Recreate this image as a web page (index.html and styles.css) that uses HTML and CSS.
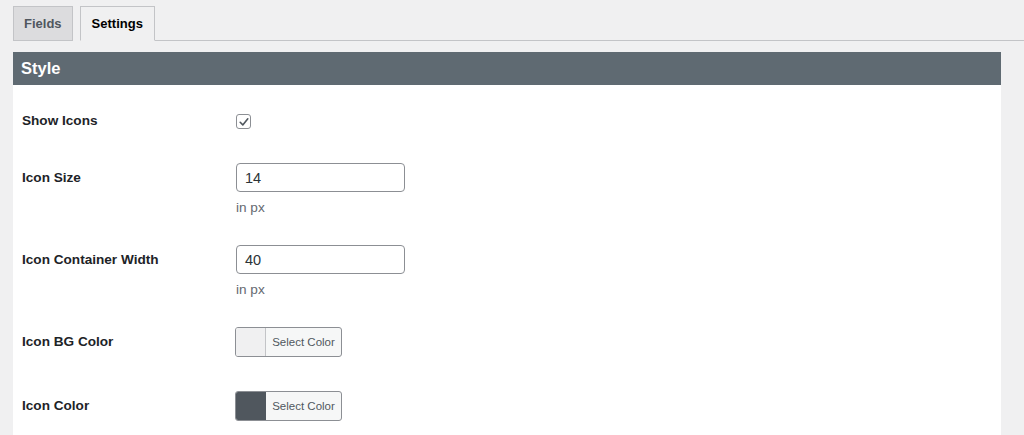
FILE: index.html
```html
<!DOCTYPE html>
<html>
<head>
<meta charset="utf-8">
<link rel="stylesheet" href="styles.css">
</head>
<body>
<div class="wrap">
  <nav class="tabs">
    <span class="tab">Fields</span>
    <span class="tab active">Settings</span>
    <span class="tab-fill"></span>
  </nav>
  <section class="panel">
    <h2 class="panel-title">Style</h2>
    <div class="rows">
      <div class="row">
        <div class="label">Show Icons</div>
        <div class="field">
          <span class="checkbox">
            <svg width="12" height="12" viewBox="0 0 12 12"><path d="M2.2 6.3 L4.8 8.9 L9.8 2.8" fill="none" stroke="#50575e" stroke-width="1.6" stroke-linecap="round" stroke-linejoin="round"/></svg>
          </span>
        </div>
      </div>
      <div class="row">
        <div class="label lbl-input">Icon Size</div>
        <div class="field">
          <div class="input">14</div>
          <div class="desc">in px</div>
        </div>
      </div>
      <div class="row">
        <div class="label lbl-input">Icon Container Width</div>
        <div class="field">
          <div class="input">40</div>
          <div class="desc">in px</div>
        </div>
      </div>
      <div class="row">
        <div class="label lbl-input">Icon BG Color</div>
        <div class="field">
          <div class="color-btn"><span class="swatch light"></span><span class="color-text">Select Color</span></div>
        </div>
      </div>
      <div class="row">
        <div class="label lbl-input">Icon Color</div>
        <div class="field">
          <div class="color-btn"><span class="swatch dark"></span><span class="color-text">Select Color</span></div>
        </div>
      </div>
    </div>
  </section>
</div>
</body>
</html>
```
FILE: styles.css
```css
html, body {
  margin: 0;
  padding: 0;
  background: #f0f0f1;
  font-family: "Liberation Sans", Arial, sans-serif;
  color: #1d2327;
  overflow: hidden;
}
.wrap {
  padding: 6px 23px 0 13px;
}
.tabs {
  display: flex;
  align-items: flex-end;
  height: 35px;
}
.tab {
  box-sizing: border-box;
  height: 35px;
  padding: 0 10px;
  display: flex;
  align-items: center;
  font-size: 13px;
  font-weight: bold;
  color: #50575e;
  background: #dcdcde;
  border: 1px solid #c3c4c7;
  margin-right: 7px;
}
.tab.active {
  padding: 0 11px;
  background: #f0f0f1;
  color: #000;
  border-bottom-color: #f0f0f1;
  margin-right: 0;
}
.tab-fill {
  flex: 1;
  border-bottom: 1px solid #c3c4c7;
  margin-right: -23px;
}
.panel {
  margin-top: 11px;
  background: #fff;
  height: 400px;
}
.panel-title {
  margin: 0;
  height: 33px;
  box-sizing: border-box;
  background: #5f6a72;
  color: #fff;
  font-size: 16.5px;
  font-weight: bold;
  padding: 0 8px;
  display: flex;
  align-items: center;
}
.rows {
  padding-top: 28px;
}
.row {
  display: flex;
  padding-left: 9px;
}
.label {
  width: 214px;
  font-size: 13.6px;
  font-weight: bold;
  color: #1d2327;
  line-height: 16px;
}
.row:nth-child(1) { height: 50px; }
.row:nth-child(2) { height: 82px; }
.row:nth-child(3) { height: 82px; }
.row:nth-child(4) { height: 64px; }
.lbl-input { padding-top: 7px; }
.checkbox {
  box-sizing: border-box;
  width: 15px;
  height: 15px;
  margin-top: 1px;
  border: 1px solid #8c8f94;
  border-radius: 3px;
  display: flex;
  align-items: center;
  justify-content: center;
  background: #fff;
}
.input {
  box-sizing: border-box;
  width: 169px;
  height: 29px;
  border: 1px solid #8c8f94;
  border-radius: 4px;
  padding: 0 8px;
  display: flex;
  align-items: center;
  font-size: 14.5px;
  color: #2c3338;
}
.desc {
  margin-top: 8px;
  font-size: 13.6px;
  color: #646970;
}
.color-btn {
  box-sizing: border-box;
  display: flex;
  width: 107px;
  height: 30px;
  border: 1px solid #8c8f94;
  border-radius: 3px;
  overflow: hidden;
  background: #f6f7f7;
  margin-left: -1px;
}
.swatch {
  width: 29px;
  border-right: 1px solid #c3c4c7;
}
.swatch.light { background: #f0f0f1; }
.swatch.dark { background: #50575e; border-right-color: #50575e; }
.color-text {
  flex: 1;
  display: flex;
  align-items: center;
  justify-content: center;
  font-size: 11.5px;
  color: #50575e;
}
```
